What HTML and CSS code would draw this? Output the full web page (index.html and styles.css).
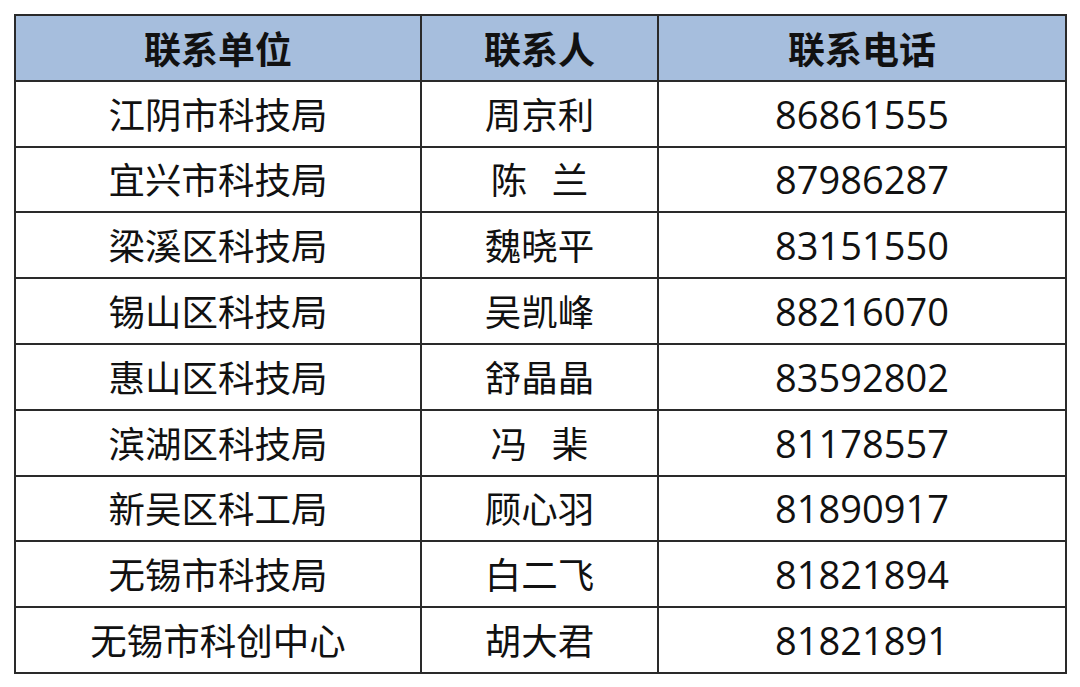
FILE: index.html
```html
<!DOCTYPE html>
<html lang="zh-CN">
<head>
<meta charset="utf-8">
<link rel="stylesheet" href="styles.css">
</head>
<body>
<table class="contacts">
  <colgroup>
    <col class="c1"><col class="c2"><col class="c3">
  </colgroup>
  <thead>
    <tr><th>联系单位</th><th>联系人</th><th>联系电话</th></tr>
  </thead>
  <tbody>
    <tr><td>江阴市科技局</td><td>周京利</td><td class="num">86861555</td></tr>
    <tr><td>宜兴市科技局</td><td class="sp">陈&nbsp;&nbsp;&nbsp;兰</td><td class="num">87986287</td></tr>
    <tr><td>梁溪区科技局</td><td>魏晓平</td><td class="num">83151550</td></tr>
    <tr><td>锡山区科技局</td><td>吴凯峰</td><td class="num">88216070</td></tr>
    <tr><td>惠山区科技局</td><td>舒晶晶</td><td class="num">83592802</td></tr>
    <tr><td>滨湖区科技局</td><td class="sp">冯&nbsp;&nbsp;&nbsp;棐</td><td class="num">81178557</td></tr>
    <tr><td>新吴区科工局</td><td>顾心羽</td><td class="num">81890917</td></tr>
    <tr><td>无锡市科技局</td><td>白二飞</td><td class="num">81821894</td></tr>
    <tr><td>无锡市科创中心</td><td>胡大君</td><td class="num">81821891</td></tr>
  </tbody>
</table>
</body>
</html>
```

FILE: styles.css
```css
html, body {
  margin: 0;
  padding: 0;
  background: #ffffff;
}
body {
  padding: 14px 0 0 14px;
  font-family: "Noto Sans CJK SC", "Noto Sans", sans-serif;
  color: #111111;
}
.contacts {
  border-collapse: collapse;
  table-layout: fixed;
  width: 1051px;
}
.c1 { width: 406px; }
.c2 { width: 237px; }
.c3 { width: 408px; }
.contacts th,
.contacts td {
  border: 2px solid #2a2a2a;
  height: 63.8px;
  padding: 0;
  text-align: center;
  vertical-align: middle;
  font-size: 36.5px;
  line-height: 42px;
  white-space: nowrap;
}
.contacts th {
  background: #a6bedd;
  font-weight: 700;
  font-size: 37px;
  color: #111111;
}
.contacts td {
  font-weight: 400;
}
.contacts td.num {
  font-family: "Open Sans", "Noto Sans", sans-serif;
  font-size: 38px;
}
```
